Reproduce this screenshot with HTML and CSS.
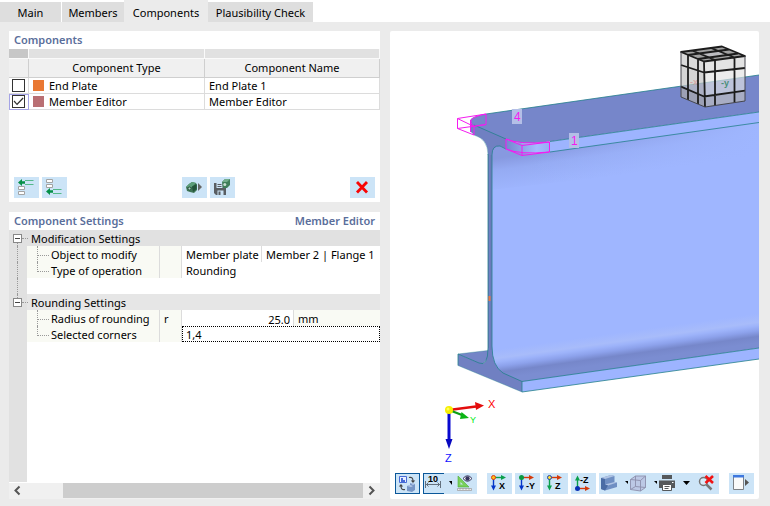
FILE: index.html
```html
<!DOCTYPE html>
<html lang="en">
<head>
<meta charset="utf-8">
<title>Steel joint – Components</title>
<link rel="stylesheet" href="styles.css">
</head>
<body>
<div class="dialog">
  <nav class="tabs">
    <button class="tab tab-main" type="button">Main</button>
    <button class="tab tab-members" type="button">Members</button>
    <button class="tab tab-components active" type="button">Components</button>
    <button class="tab tab-check" type="button">Plausibility Check</button>
  </nav>

  <main class="content">
    <div class="left">
      <section class="panel components">
        <h2 class="title">Components</h2>
        <table class="list">
          <colgroup><col class="c-check"><col class="c-half"><col></colgroup>
          <thead>
            <tr class="strip"><td class="dark"></td><td></td><td></td></tr>
            <tr><th></th><th>Component Type</th><th>Component Name</th></tr>
          </thead>
          <tbody>
            <tr>
              <td class="check"><input type="checkbox" aria-label="End Plate"></td>
              <td><span class="type"><i class="swatch orange"></i>End Plate</span></td>
              <td>End Plate 1</td>
            </tr>
            <tr>
              <td class="check current"><input type="checkbox" aria-label="Member Editor" checked></td>
              <td><span class="type"><i class="swatch rose"></i>Member Editor</span></td>
              <td>Member Editor</td>
            </tr>
          </tbody>
        </table>
        <div class="actions">
          <button class="tool" type="button" aria-label="Insert before">
            <svg viewBox="0 0 25 21"><g fill="#fff" stroke="#a3a3a3"><path d="M4.500 9.500h6v3h-6zM4.500 14.500h6v3h-6z"/></g><path d="M11 3.500h8.500M11 7.500h8.500" stroke="#55b98a" fill="none"/><path d="M4 5.500 8 2v2.300h3v2.500H8V9z" fill="#069048"/></svg>
          </button>
          <button class="tool" type="button" aria-label="Insert after">
            <svg viewBox="0 0 25 21"><g fill="#fff" stroke="#a3a3a3"><path d="M4.500 2.500h6v3h-6zM4.500 7.500h6v3h-6z"/></g><path d="M11 12.500h8.500M11 16.500h8.500" stroke="#55b98a" fill="none"/><path d="M4 14.500 8 11v2.300h3v2.500H8V18z" fill="#069048"/></svg>
          </button>
          <span class="grow"></span>
          <button class="tool" type="button" aria-label="Load component">
            <svg viewBox="0 0 25 21"><path d="M4 10 7 7l3-2 4 1 1 2v5l-3 3-4-1-3-1z" fill="#3f7656"/><path d="m4 10 3-3 3-2 4 1-4 4z" fill="#5c9d79"/><path d="M10 9.500 14.500 7v5L11 15z" fill="#24523a"/><circle cx="7.500" cy="11.500" r="1.500" fill="#b7d2c8" stroke="#24523a"/><path d="m16 6 4 4-4 4z" fill="#666"/></svg>
          </button>
          <button class="tool" type="button" aria-label="Save component">
            <svg viewBox="0 0 25 21"><path d="M4 6h12v12H6l-2-2z" fill="#595e63"/><path d="M6.500 6h6v5h-6z" fill="#cce4f7"/><path d="M7.500 7.500h4M7.500 9.500h4" stroke="#595e63"/><path d="M7.500 13.500h6V18h-6z" fill="#cce4f7"/><path d="M8.500 14.500h2V18h-2z" fill="#595e63"/><path d="m12 5 3-3h5v6l-3 3h-4z" fill="#3f7f5b"/><path d="m12 5 3-3h5l-3 3z" fill="#73ad8c"/><circle cx="14.800" cy="7.500" r="1.500" fill="#c7dfd2"/></svg>
          </button>
          <span class="grow"></span>
          <button class="tool" type="button" aria-label="Delete component">
            <svg viewBox="0 0 25 21"><path d="m7 5 10 10.500M17 5 7 15.500" stroke="#f80505" stroke-width="2.800" fill="none"/></svg>
          </button>
        </div>
      </section>

      <section class="panel settings">
        <header class="title split"><h2>Component Settings</h2><h2>Member Editor</h2></header>
        <div class="tree">
          <table>
            <colgroup><col class="s-gutter"><col class="s-name"><col class="s-symbol"><col class="s-value"><col class="s-unit"><col></colgroup>
            <tbody>
              <tr class="group">
                <td class="gutter start"><button class="fold" type="button" aria-label="Collapse Modification Settings"></button></td>
                <th colspan="5">Modification Settings</th>
              </tr>
              <tr><td class="gutter line"></td><th class="leaf more">Object to modify</th><td class="soft"></td><td class="rule">Member plate</td><td colspan="2">Member 2 | Flange 1</td></tr>
              <tr><td class="gutter line"></td><th class="leaf">Type of operation</th><td class="soft"></td><td colspan="3">Rounding</td></tr>
              <tr><td class="gutter line"></td><td colspan="5"></td></tr>
              <tr class="group light">
                <td class="gutter end"><button class="fold" type="button" aria-label="Collapse Rounding Settings"></button></td>
                <th colspan="5">Rounding Settings</th>
              </tr>
              <tr><td class="gutter"></td><th class="leaf more"><label for="radius">Radius of rounding</label></th><td class="soft">r</td><td class="rule edit" colspan="2"><input id="radius" class="number" value="25.0"></td><td class="unit">mm</td></tr>
              <tr><td class="gutter"></td><th class="leaf"><label for="corners">Selected corners</label></th><td class="soft"></td><td class="edit" colspan="3"><input id="corners" class="focused" value="1,4"></td></tr>
            </tbody>
          </table>
        </div>
        <div class="scrollbar">
          <button type="button" aria-label="Scroll left"><svg viewBox="0 0 17 15"><path d="M10.500 3.500 6.500 7.500l4 4" fill="none" stroke="#555" stroke-width="2"/></svg></button>
          <div class="track"><div class="thumb"></div></div>
          <button type="button" aria-label="Scroll right"><svg viewBox="0 0 17 15"><path d="m6.500 3.500 4 4-4 4" fill="none" stroke="#555" stroke-width="2"/></svg></button>
        </div>
      </section>
    </div>

    <section class="panel viewer">
      <svg class="scene" viewBox="390 31 369 437" preserveAspectRatio="xMinYMin slice" role="img" aria-label="3D view of the member">
        <defs>
          <linearGradient id="web" gradientUnits="userSpaceOnUse" x1="500" y1="349" x2="504" y2="378">
            <stop offset="0" stop-color="#9fb6ff"/><stop offset=".3" stop-color="#a8bcfa"/><stop offset=".42" stop-color="#9db3fa"/><stop offset=".58" stop-color="#8da2ec"/><stop offset=".78" stop-color="#7687ca"/><stop offset="1" stop-color="#7b8dd1"/>
          </linearGradient>
          <linearGradient id="shade" gradientUnits="userSpaceOnUse" x1="540" y1="152" x2="545" y2="186">
            <stop offset="0" stop-color="#8799e0"/><stop offset=".35" stop-color="#95abf3"/><stop offset="1" stop-color="#9fb6ff"/>
          </linearGradient>
          <linearGradient id="fade"><stop offset="0" stop-color="#9fb6ff" stop-opacity="0"/><stop offset="1" stop-color="#9fb6ff"/></linearGradient>
          <linearGradient id="round"><stop offset="0" stop-color="#7587ce"/><stop offset=".7" stop-color="#a5bbff"/><stop offset="1" stop-color="#96abf4"/></linearGradient>
        </defs>
        <!-- bottom flange and web -->
        <path d="M458 354 488 350.500V358L482 365z" fill="#7485c7"/>
        <path d="M491 150 497 145 506 148 759 120V348L522 382 498 374 490 362z" fill="url(#web)"/>
        <path d="M491 150 497 145 506 148 759 122V160L491 190z" fill="url(#shade)"/>
        <path d="M530 148 759 121V170L530 190z" fill="url(#fade)"/>
        <path d="M522 381.500 759 348V359L522 392z" fill="#9db4ff"/>
        <path d="M470 121 507 139V149L500 146Q493 145 492 154V346Q492 366 503 373L522 381.500V392L458 365.500V354L479 363Q488 367 488 348V154Q488 139 474 135L470 131z" fill="#7080c2"/>
        <path d="M488.500 155V348M491 155V350" stroke="#6676b5" fill="none"/>
        <!-- top flange -->
        <path d="M486 114 759 75V112L550 141.500Q520 146 506 139L474 125Q466 120 475 116.500z" fill="#7686ca"/>
        <path d="M550 141.500 759 112V122.500L550 152z" fill="#9db4ff"/>
        <path d="M506 139Q520 146 550 141.500V152Q525 157 506 149z" fill="url(#round)"/>
        <g fill="none" stroke="#23808b" stroke-width=".8">
          <path d="M486 114 759 75M474 125 506 139M550 141.500 759 112M550 152 759 122.500M506 149 500 146Q492 145 492 155V346Q492 366 503 373L522 381.500 759 348M522 381.500V392L759 359M458 365.500V354L479 363Q488 367 488 348V154"/>
          <path d="M458 354 488 350.500M458 365.500 522 392M488 155Q488 139 474 135" stroke-opacity=".45"/>
        </g>
        <path d="M488.500 296h2v5h-2z" fill="#eb7845"/>
        <!-- rounding preview -->
        <g fill="none" stroke="#f41bf0" stroke-width="1">
          <path d="M457.500 118.500 486 114V124.500L457.500 128.500zM457.500 118.500 474 126.500V135L457.500 128.500M486 114Q464 118 474 126.500M486 124.500 470 127M470.500 120V132"/>
          <path d="M506 139V149L522 155.500 549.500 152V142L522 145.500zM522 145.500V155.500M506 139Q520 145 549.500 142M506 149Q520 155 549.500 152"/>
        </g>
        <path d="M512 109h10v15h-10zM569 133h10v15h-10z" fill="#b4bfe7"/>
        <g class="mark"><text x="514" y="121">4</text><text x="571" y="145">1</text></g>
        <!-- orientation cube -->
        <path d="M681 52 722 46.500 745 56V101L705 107 681 97z" fill="#fff" fill-opacity=".25"/>
        <path d="M681 52 704 61.500 705 107 681 97z" fill="#b9b9b9" fill-opacity=".6"/>
        <path d="M704 61.500 745 56V101L705 107z" fill="#ddd" fill-opacity=".55"/>
        <path d="M681 52 722 46.500 745 56 704 61.500z" fill="#a2a2a2"/>
        <path d="M701 53 717 51 727 54 711 57z" fill="#bcbcc0"/>
        <path d="M704 61.500 745 56V68L704 72.500zM681 52 704 61.500V72.500L681 65z" fill="#ddd" fill-opacity=".6"/>
        <path d="M681 86.700 704 96.500 745 90.700V101L705 107 681 97z" fill="#777b92" fill-opacity=".3"/>
        <text class="face" x="721" y="86" fill="#498f78">-y</text><text class="face" x="690" y="85" fill="#d8898b" fill-opacity=".6">-x</text>
        <g fill="none" stroke="#1c1c1c" stroke-width="1.800" stroke-linejoin="round">
          <path d="M681 52 722 46.500 745 56 704 61.500zM704 61.500 705 107M681 65 704 72.500 745 68M681 86.700 704 96.500 745 90.700M688 55V100M698 59V104M715 60V105.500M734.500 57.500V102.500M688 55 729 49.500M698 59 738 53.500M692 50.500 715 60M711 48 734.500 57.500"/>
          <path d="M681 52V97L705 107 745 101V56" stroke-width="1" stroke="#44454d"/>
        </g>
        <!-- global axes -->
        <path d="M449 410 476 406.500" stroke="#e30d0d" stroke-width="2.600"/><path d="m475 402 9 3.500-8 4.500z" fill="#e30d0d"/>
        <path d="m449 410 13 5" stroke="#0d9e14" stroke-width="2.400"/><path d="m461.500 412 7.500 6-9 1z" fill="#0bb415"/>
        <path d="M449 410V440" stroke="#0808d0" stroke-width="3"/><path d="M445.500 439h7l-3.500 10z" fill="#0808c0"/>
        <circle cx="449" cy="410" r="4" fill="#f6ee00"/><circle cx="448" cy="409" r="1.500" fill="#ffff58"/>
        <g class="axis"><text x="488" y="408" fill="#f00">X</text><text x="470" y="423" class="small" fill="#00ec14">Y</text><text x="445" y="462" fill="#11f">Z</text></g>
      </svg>

      <div class="viewbar">
        <button class="tool on" type="button" aria-label="Switch view">
          <svg viewBox="0 0 25 21"><path d="M4.500 3.500h7v6h-7z" fill="#e7efff" stroke="#476bd5"/><path d="M6 5h2v2h2v2H6z" fill="#476bd5"/><path d="M14 4.500q4-1 4 3.500M10 16.500q-4 1-4-3.500" fill="none" stroke="#444" stroke-width="1.200"/><path d="M15.800 7.500h4.400L18 10zM3.800 13.500h4.400L6 11z" fill="#444"/><path d="m12 13 3-1v-2l5 1v6l-3 2-5-1z" fill="#7796c6"/><path d="m12 13 3-1 3 1-2 1zM15 10l5 1-2 1z" fill="#b8cbea"/></svg>
        </button>
        <div class="toolset">
          <button class="seg w21 dim" type="button" aria-label="Show dimensions">
            <svg viewBox="0 0 21 21"><text x="5" y="9">10</text><path d="M2.500 8v7M17.500 8v7M3 11.500h14M5.500 9.500l-2 2 2 2M14.500 9.500l2 2-2 2" fill="none" stroke="#64717e"/></svg>
          </button>
          <button class="seg w8" type="button" aria-label="Dimension options"><svg viewBox="0 0 8 21"><path d="M5 8h3v4z"/></svg></button>
          <button class="seg w25" type="button" aria-label="Measure">
            <svg viewBox="0 0 25 21"><path d="m6 3 11 11H6z" fill="#79cf5b" stroke="#4eac35" stroke-width=".6"/><path d="m8.500 9 2.500 2.500H8.500z" fill="#cce4f7"/><path d="M5.500 15.500h14v2h-14z" fill="#eee" stroke="#999" stroke-width=".7"/><path d="M8 15v2M11 15v2M14 15v2M17 15v2" stroke="#999" stroke-width=".6"/><path d="M11 5.500q4.500-5.500 9 0-4.500 5.500-9 0z" fill="#fff" stroke="#34345e"/><circle cx="15.500" cy="5.500" r="2.200" fill="#34345e"/></svg>
          </button>
        </div>
        <span class="gap"></span>
        <button class="tool" type="button" aria-label="View in X">
          <svg viewBox="0 0 25 21"><path d="M6.500 4.500H15" stroke="#0aa04c" stroke-width="1.400"/><path d="m14 2 5 2.500L14 7z" fill="#0aa04c"/><path d="M6.500 4.500V13" stroke="#0436c9" stroke-width="1.400"/><path d="M4 12.500h5l-2.500 5z" fill="#0436c9"/><circle cx="6.500" cy="4.500" r="2" fill="#ffc21a" stroke="#d93b10"/><text x="12" y="16">X</text></svg>
        </button>
        <button class="tool" type="button" aria-label="View in -Y">
          <svg viewBox="0 0 25 21"><path d="M6.500 4.500H15" stroke="#d43a0b" stroke-width="1.400"/><path d="m14 2 5 2.500L14 7z" fill="#d43a0b"/><path d="M6.500 4.500V13" stroke="#0436c9" stroke-width="1.400"/><path d="M4 12.500h5l-2.500 5z" fill="#0436c9"/><circle cx="6.500" cy="4.500" r="2.500" fill="#0b9a43"/><text x="11" y="16">-Y</text></svg>
        </button>
        <button class="tool" type="button" aria-label="View in Z">
          <svg viewBox="0 0 25 21"><path d="M6.500 4.500H15" stroke="#d43a0b" stroke-width="1.400"/><path d="m14 2 5 2.500L14 7z" fill="#d43a0b"/><path d="M6.500 4.500V13" stroke="#0aa04c" stroke-width="1.400"/><path d="M4 12.500h5l-2.500 5z" fill="#0aa04c"/><circle cx="6.500" cy="4.500" r="2" fill="#ffdf2e" stroke="#1a40b8"/><text x="12" y="16">Z</text></svg>
        </button>
        <button class="tool" type="button" aria-label="View in -Z">
          <svg viewBox="0 0 25 21"><path d="M6.500 15.500H15" stroke="#d43a0b" stroke-width="1.400"/><path d="m14 13 5 2.500-5 2.500z" fill="#d43a0b"/><path d="M6.500 15.500V7" stroke="#0aa04c" stroke-width="1.400"/><path d="M4 7.500h5l-2.500-5z" fill="#0aa04c"/><circle cx="6.500" cy="15.500" r="2.500" fill="#0931b5"/><text x="9" y="10">-Z</text></svg>
        </button>
        <div class="toolset">
          <button class="seg w21" type="button" aria-label="Display mode">
            <svg viewBox="0 0 21 21"><path d="m2 5 10-3 3.500 1v6L18 9.500V14L6 17.500 2 16z" fill="#6f8fc3"/><path d="m2 5 10-3 3.500 1L6 6zM6 11.500 15.500 9l2.500.5-9 3z" fill="#b0c4e4"/><path d="m2 5 4 1v5.500l3 1L6 17.500 2 16z" fill="#4a6ca5"/></svg>
          </button>
          <button class="seg w8" type="button" aria-label="Display mode options"><svg viewBox="0 0 8 21"><path d="M5 8h3v3z"/></svg></button>
          <button class="seg w21" type="button" aria-label="Transparency">
            <svg viewBox="0 0 21 21"><path d="M2.500 6.500 7.500 3H17.500v11.500L12.500 18 2.500 16.500z" fill="#bcc8e5"/><path d="M2.500 6.500 7.500 3H17.500L12.500 7.500zM2.500 6.500v10l10 1.500V7.500M12.500 18l5-3.500V3M7.500 3v10.500l10 1M7.500 13.500l-5 3" fill="none" stroke="#8c8fab" stroke-width=".9"/></svg>
          </button>
          <button class="seg w8" type="button" aria-label="Transparency options"><svg viewBox="0 0 8 21"><path d="M5 8h3v3z"/></svg></button>
          <button class="seg w21" type="button" aria-label="Print">
            <svg viewBox="0 0 21 21"><path d="M5 2h10v4H5zM2 7.500h16V15H2z" fill="#55585b"/><path d="M5.500 11.500h9v6h-9z" fill="#fff" stroke="#55585b"/><path d="M7.500 13.500h5M7.500 15.500h4" stroke="#55585b"/><path d="M15 9h1.500v1H15z" fill="#fff"/></svg>
          </button>
          <button class="seg w14" type="button" aria-label="Print options"><svg viewBox="0 0 14 21"><path d="M5 8h7l-3.500 4z"/></svg></button>
          <button class="seg w27" type="button" aria-label="Reset zoom">
            <svg viewBox="0 0 27 21"><circle cx="11.500" cy="8.500" r="4" fill="#d9ebf9" stroke="#777" stroke-width="1.500"/><path d="m14.500 11.500 5 5" stroke="#777" stroke-width="2.500"/><path d="m13.500 3 7.500 7M21 3l-7.500 7" stroke="#f01414" stroke-width="2.600"/></svg>
          </button>
        </div>
        <span class="gap"></span>
        <button class="tool" type="button" aria-label="Open in window">
          <svg viewBox="0 0 25 21"><path d="M4.500 2.500h10v14h-10z" fill="#fafafa" stroke="#7d8186"/><path d="M4 2h11v2.500H4z" fill="#3e78df"/><path d="m16 6 4 3.500-4 3.500z" fill="#555"/></svg>
        </button>
      </div>
    </section>
  </main>
</div>
</body>
</html>
```
FILE: styles.css
```css
* { box-sizing: border-box; }

body {
  margin: 0;
  background: #fff;
  color: #000;
  font: 11px/16px "Noto Sans", "Open Sans", sans-serif;
}

button, input { font: inherit; color: inherit; }
button { padding: 0; border: 0; background: none; }
svg { display: block; }
table { width: 100%; border-collapse: separate; border-spacing: 0; table-layout: fixed; }
td, th { padding: 0; font-weight: 400; white-space: nowrap; }

.dialog { display: flex; flex-direction: column; min-height: 100vh; }

/* Tabs */
.tabs { display: flex; height: 22px; }
.tab { height: 21px; margin-top: 2px; background: #dedede; white-space: nowrap; }
.tab-main { width: 61px; margin-right: 1px; }
.tab-members { width: 62px; }
.tab-components { width: 84px; }
.tab-check { width: 105px; }
.tab.active { height: 23px; margin-top: 0; padding-top: 2px; background: #ebebeb; }

.content {
  flex: 1;
  display: grid;
  grid-template-columns: 371fr 369fr;
  gap: 10px;
  padding: 9px 11px 8px 9px;
  background: #ebebeb;
}
.left { display: flex; flex-direction: column; gap: 10px; min-width: 0; }
.panel { display: flex; flex-direction: column; min-width: 0; background: #fff; }

.title, .title h2 { margin: 0; color: #5a6e9b; font-size: 11px; line-height: 18px; font-weight: 600; }
.title { padding: 0 5px; }
.split { display: flex; justify-content: space-between; padding: 0 5px; }

/* Component list */
.c-check { width: 20px; }
.c-half { width: 176px; }
.list td, .list th { height: 16px; padding: 0 4px; border-right: 1px solid #dcdcdc; border-bottom: 1px solid #dcdcdc; line-height: 15px; }
.list .strip td { height: 10px; background: #e1e1e1; border-color: #fafafa; }
.list .strip .dark { background: #c7c7c7; }
.list th { height: 19px; background: #f0f0f0; border-color: #cfcfcf; line-height: 18px; }
.list .check { padding: 0 0 0 3px; }
.list .current { outline: 1px solid #a4a3e6; outline-offset: -1px; }
.check input {
  appearance: none;
  display: block;
  width: 13px;
  height: 13px;
  margin: 0;
  border: 1px solid #333;
  background: #fff;
}
.check input:checked::after {
  content: "";
  display: block;
  width: 11px;
  height: 11px;
  background: #333;
  clip-path: polygon(5% 50%, 14% 42%, 36% 68%, 88% 14%, 96% 22%, 37% 84%);
}
.type { display: flex; align-items: center; gap: 5px; }
.swatch { width: 11px; height: 11px; }
.orange { background: #e97833; }
.rose { background: #b96f73; }

.actions { display: flex; gap: 3px; padding: 67px 5px 4px; }
.grow { flex: 1; }
.tool { flex: none; width: 25px; height: 21px; background: #cce4f7; }
.tool svg { width: 25px; height: 21px; }
.tool.on { box-shadow: inset 0 0 0 1px #0a5799; }

/* Settings tree */
.settings { flex: 1; }
.tree { flex: 1; background: linear-gradient(to right, #e1e1e1 18px, #fff 18px); margin-bottom: 1px; }
.s-gutter { width: 18px; }
.s-name { width: 133px; }
.s-symbol { width: 22px; }
.s-value { width: 80px; }
.s-unit { width: 32px; }
.tree td, .tree th { height: 16px; padding: 2px 0 0 4px; line-height: 14px; text-align: left; }
.tree .group { background: #e1e1e1; }
.tree .light th { background: #e6e6e6; }
.tree .leaf { position: relative; padding-left: 24px; background: #f9faf4; border-right: 1px solid #dcdcdc; }
.tree .soft { background: #f9faf4; border-right: 1px solid #dcdcdc; }
.tree .rule { border-right: 1px solid #dcdcdc; }
.tree .unit { background: #f9faf4; }
.tree .gutter { position: relative; padding: 0 0 0 4px; }
.tree .edit { padding: 0; }

.leaf::before {
  content: "";
  position: absolute;
  left: 10px;
  top: 0;
  width: 11px;
  height: 9px;
  border-left: 1px dotted #999;
  border-bottom: 1px dotted #999;
}
.more::after, .gutter.line::after, .gutter.start::after, .gutter.end::after {
  content: "";
  position: absolute;
  left: 10px;
  top: 0;
  height: 16px;
  border-left: 1px dotted #999;
}
.gutter.line::after { left: 8px; }
.gutter.start::after { left: 8px; top: 13px; height: 3px; }
.gutter.end::after { left: 8px; height: 4px; }
.group .gutter::before {
  content: "";
  position: absolute;
  left: 13px;
  top: 8px;
  width: 6px;
  border-top: 1px dotted #999;
}
.fold {
  display: block;
  width: 9px;
  height: 9px;
  border: 1px solid #888;
  background: linear-gradient(#444, #444) center / 5px 1px no-repeat #fff;
}

.edit input { display: block; width: 100%; height: 16px; border: 0; background: #fff; outline: 0; line-height: 14px; }
.edit .number { padding: 2px 3px 0; text-align: right; }
.edit .focused { padding: 1px 3px 0; border: 1px dotted #000; }

.scrollbar { display: flex; height: 16px; background: #f0f0f0; }
.scrollbar button, .scrollbar svg { width: 17px; height: 15px; }
.track { flex: 1; display: flex; justify-content: flex-end; }
.thumb { width: 89%; height: 15px; background: #cdcdcd; }

/* 3D view */
.viewer { border-radius: 2px; }
.scene { flex: 1; width: 100%; min-height: 0; font-family: "Liberation Sans", sans-serif; }
.mark { font-size: 12px; fill: #f41bf0; }
.axis { font-size: 11px; }
.axis .small { font-size: 9px; }
.face { font-size: 9px; font-weight: 700; }

.viewbar { display: flex; gap: 3px; padding: 5px; }
.viewbar text { font: 700 9px "Liberation Sans", sans-serif; }
.gap { flex: 1; max-width: 4px; }
.toolset { display: flex; flex: none; background: #cce4f7; }
.seg, .seg svg { height: 21px; }
.seg svg { width: 100%; }
.w8 { width: 8px; }
.w14 { width: 14px; }
.w21 { width: 21px; }
.w25 { width: 25px; }
.w27 { width: 27px; }
.dim { box-shadow: inset 1px 1px #0a5799, inset 0 -1px #0a5799; }
```
